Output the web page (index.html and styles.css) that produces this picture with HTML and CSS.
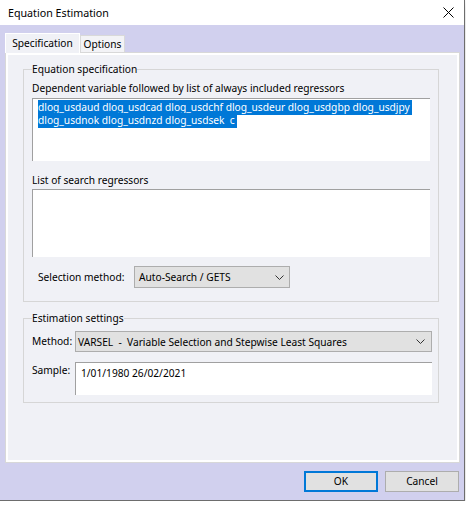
FILE: index.html
```html
<!DOCTYPE html>
<html>
<head>
<meta charset="utf-8">
<link rel="stylesheet" href="styles.css">
</head>
<body>
<div class="window">
  <div class="titlebar">
    <span class="title">Equation Estimation</span>
    <svg class="close" width="11" height="11" viewBox="0 0 11 11"><path d="M0.5 0.5 L10.5 10.5 M10.5 0.5 L0.5 10.5" stroke="#000" stroke-width="1" fill="none"/></svg>
  </div>
  <div class="client">
    <div class="tabs">
      <div class="tab active">Specification</div>
      <div class="tab">Options</div>
    </div>
    <div class="panel">
      <fieldset class="group g1">
        <legend>Equation specification</legend>
        <div class="label">Dependent variable followed by list of always included regressors</div>
        <div class="edit edit1"><span class="sel">dlog_usdaud dlog_usdcad dlog_usdchf dlog_usdeur dlog_usdgbp dlog_usdjpy </span><br><span class="sel">dlog_usdnok dlog_usdnzd dlog_usdsek  c </span></div>
        <div class="label label2">List of search regressors</div>
        <div class="edit edit2"></div>
        <div class="selrow">
          <span class="sellabel">Selection method:</span>
          <div class="combo combo1"><span>Auto-Search / GETS</span><svg class="chev" width="9" height="5" viewBox="0 0 9 5"><path d="M0.5 0.5 L4.5 4.5 L8.5 0.5" stroke="#333" fill="none"/></svg></div>
        </div>
      </fieldset>
      <fieldset class="group g2">
        <legend>Estimation settings</legend>
        <div class="formgrid">
          <span class="flabel">Method:</span>
          <div class="combo combo2"><span>VARSEL  -  Variable Selection and Stepwise Least Squares</span><svg class="chev" width="9" height="5" viewBox="0 0 9 5"><path d="M0.5 0.5 L4.5 4.5 L8.5 0.5" stroke="#333" fill="none"/></svg></div>
          <span class="flabel slabel">Sample:</span>
          <div class="edit edit3">1/01/1980 26/02/2021</div>
        </div>
      </fieldset>
    </div>
    <div class="buttons">
      <div class="btn ok">OK</div>
      <div class="btn">Cancel</div>
    </div>
  </div>
</div>
</body>
</html>
```
FILE: styles.css
```css
html, body {
  margin: 0;
  padding: 0;
  background: #ffffff;
}
body {
  font-family: "Noto Sans", "Open Sans", sans-serif;
  font-size: 10.2px;
  color: #000;
}
.window {
  width: 464px;
  height: 500px;
  border-right: 1px solid #6d6d6d;
  border-bottom: 1px solid #6d6d6d;
  box-shadow: 0 3px 9px rgba(0,0,0,0.18);
  background: #d1d0ee;
}
.titlebar {
  height: 25px;
  background: #ffffff;
  display: flex;
  align-items: center;
  justify-content: space-between;
  padding: 0 10px 0 8px;
}
.title {
  font-size: 10.7px;
  line-height: 16px;
}
.close {
  display: block;
}
.client {
  height: 475px;
  box-sizing: border-box;
  padding: 8px 5px 0 5px;
}
.tabs {
  display: flex;
  align-items: flex-end;
  height: 19px;
}
.tab {
  box-sizing: border-box;
  height: 17px;
  width: 45px;
  background: #f3f3f6;
  border: 1px solid #d9d9d9;
  border-bottom: none;
  line-height: 16px;
  text-align: center;
}
.tab.active {
  width: 75px;
  height: 20px;
  margin-bottom: -1px;
  background: #f0f1f6;
  border-color: #ffffff;
  position: relative;
  z-index: 1;
  line-height: 19px;
}
.panel {
  box-sizing: border-box;
  width: 455px;
  height: 411px;
  border: 1px solid #d8d8d8;
  box-shadow: inset 0 0 0 2px #ffffff;
  background: #f0f1f6;
  padding: 8px 0 0 17px;
}
.group {
  box-sizing: border-box;
  width: 416px;
  margin: 0;
  border: 1px solid #d6d6d6;
  padding: 0 8px;
  min-width: 0;
}
.group legend {
  padding: 0;
  line-height: 16px;
  height: 16px;
}
.g1 {
  padding-top: 3px;
  padding-bottom: 13px;
}
.g2 {
  margin-top: 8px;
  padding-top: 5px;
  padding-bottom: 7px;
}
.label {
  line-height: 16px;
}
.label2 {
  margin-top: 11px;
}
.edit {
  box-sizing: border-box;
  background: #ffffff;
  border-top: 1px solid #a0a0a0;
  border-left: 1px solid #a0a0a0;
}
.edit1 {
  margin-top: 2px;
  height: 63px;
  padding: 2px 0 0 5px;
  line-height: 13px;
  white-space: pre;
}
.sel {
  background: #0078d7;
  color: #ffffff;
  padding-bottom: 1px;
}
.edit2 {
  margin-top: 1px;
  height: 68px;
}
.selrow {
  display: flex;
  align-items: center;
  margin-top: 9px;
  padding-left: 6px;
}
.sellabel {
  width: 96px;
}
.combo {
  box-sizing: border-box;
  display: flex;
  align-items: center;
  justify-content: space-between;
  background: #e1e1e1;
  border: 1px solid #adadad;
  white-space: pre;
}
.combo1 {
  width: 156px;
  height: 22px;
  padding: 0 5px 0 4px;
}
.combo2 {
  width: 357px;
  height: 21px;
  padding: 0 6px 0 2px;
}
.chev {
  display: block;
}
.formgrid {
  display: grid;
  grid-template-columns: 43px 357px;
  row-gap: 10px;
  align-items: start;
}
.flabel {
  line-height: 20px;
}
.slabel {
  line-height: 16px;
}
.edit3 {
  height: 33px;
  padding: 2px 0 0 5px;
  line-height: 16px;
}
.buttons {
  display: flex;
  justify-content: flex-end;
  gap: 7px;
  margin-top: 8px;
}
.btn {
  box-sizing: border-box;
  width: 74px;
  height: 21px;
  background: #e1e1e1;
  border: 1px solid #adadad;
  text-align: center;
  line-height: 19px;
}
.btn.ok {
  border: 2px solid #0078d7;
  line-height: 17px;
}
```
